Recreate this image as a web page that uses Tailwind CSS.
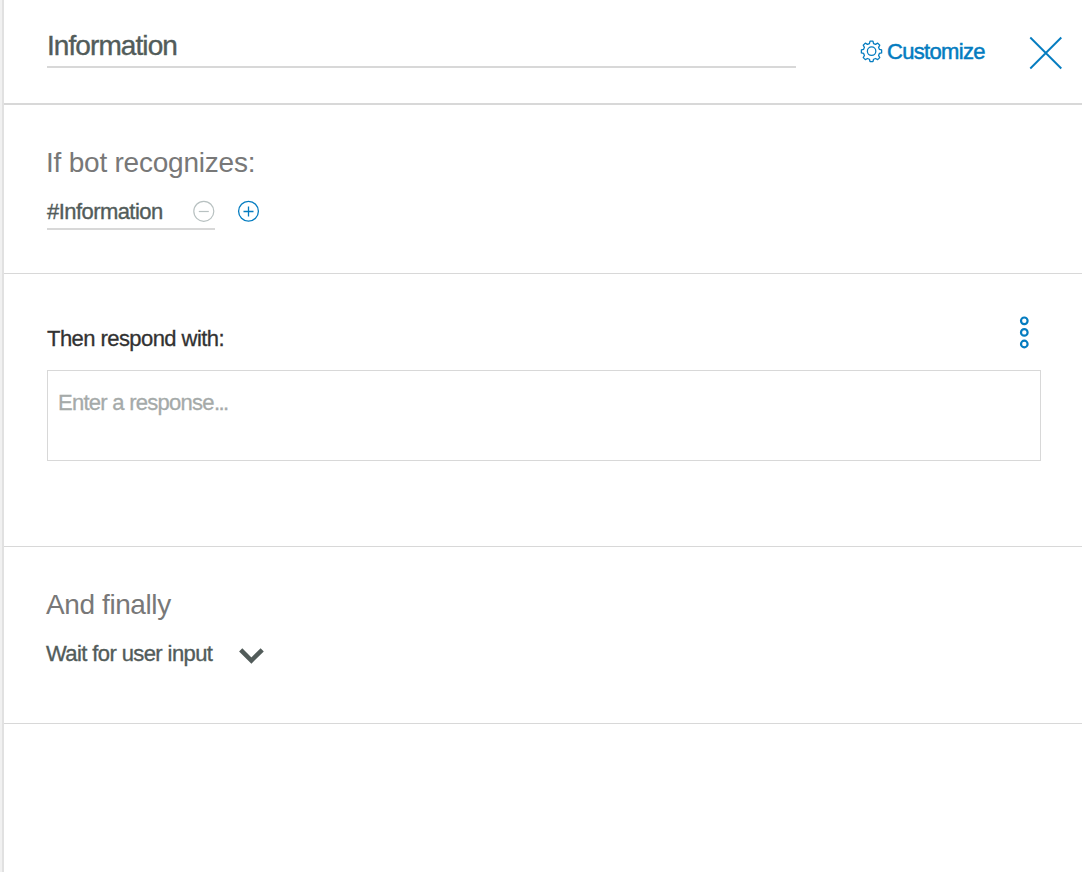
<!DOCTYPE html>
<html lang="en">
<head>
<meta charset="utf-8">
<title>Information</title>
<script src="https://cdn.jsdelivr.net/npm/@tailwindcss/browser@4"></script>
</head>
<body class="flex h-[872px] w-[1082px] overflow-hidden bg-white font-['Liberation_Sans',sans-serif] text-[22px] leading-6 text-[#525c5a]">
<div class="w-1 shrink-0 border-r-2 border-[#e1e1e1] bg-[#f1f1f1]"></div>
<main class="flex-1 bg-white">
  <header class="flex h-[105px] items-start border-b-2 border-[#d8d8d8] pl-[43px]">
    <div class="mt-[30px] h-[38px] w-[749px] border-b-2 border-[#d8d8d8] text-[28px] leading-8 tracking-[-0.92px] [-webkit-text-stroke:0.4px]">Information</div>
    <button class="mt-[40px] ml-[64px] flex w-[130px] items-start text-[#047cc0]">
      <svg class="mr-[4px] shrink-0" width="23" height="23" viewBox="-0.6 0 23.4 23.4" fill="none" stroke="currentColor" stroke-width="1.3" stroke-linejoin="round"><path d="M9.6 1.2h3l0.6 2.4 2 0.8 2.2-1.2 2.1 2.1-1.2 2.2 0.8 2 2.3 0.6v3l-2.3 0.6-0.8 2 1.2 2.2-2.1 2.1-2.2-1.2-2 0.8-0.6 2.3h-3l-0.6-2.3-2-0.8-2.2 1.2-2.1-2.1 1.2-2.2-0.8-2-2.3-0.6v-3l2.3-0.6 0.8-2-1.2-2.2 2.1-2.1 2.2 1.2 2-0.8z"/><circle cx="11.2" cy="11.4" r="4.3"/></svg>
      <span class="tracking-[-0.68px] [-webkit-text-stroke:0.5px]">Customize</span>
    </button>
    <button class="mt-[36px] ml-[39px] text-[#047cc0]" aria-label="Close"><svg width="34" height="34" viewBox="0 0 34 34" fill="none" stroke="currentColor" stroke-width="1.9"><path d="M1.3 1.5l31 31M32.3 1.5l-31 31"/></svg></button>
  </header>
  <section class="h-[169px] border-b border-[#d8d8d8] pt-[42px] pl-[42px]">
    <h2 class="text-[28px] leading-8 tracking-[-0.22px] text-[#787878]">If bot recognizes:</h2>
    <div class="mt-[21px] ml-px flex items-start">
      <div class="flex h-[30px] w-[168px] items-start justify-between border-b-2 border-[#d8d8d8]">
        <span class="tracking-[-0.56px] [-webkit-text-stroke:0.35px]">#Information</span>
        <svg width="22" height="22" viewBox="0 0 22 22" fill="none" stroke="#b8c1c1" stroke-width="1.2"><circle cx="10.8" cy="11.3" r="10"/><path d="M5.8 11.5h10"/></svg>
      </div>
      <svg class="ml-[22px]" width="23" height="23" viewBox="0 0 23 23" fill="none" stroke="#047cc0" stroke-width="1.3"><circle cx="11.5" cy="11.3" r="9.9"/><path d="M6.5 11.5h10M11.5 6.5v10"/></svg>
    </div>
  </section>
  <section class="h-[273px] border-b border-[#d8d8d8] pt-[42px] pr-[41px] pl-[43px]">
    <div class="flex h-[54px] items-start justify-between">
      <h3 class="mt-[11px] tracking-[-0.56px] text-[#323232] [-webkit-text-stroke:0.3px]">Then respond with:</h3>
      <svg class="mr-[11px]" width="12" height="34" viewBox="0 0 12 34" fill="none" stroke="#047cc0" stroke-width="2.2"><circle cx="6.3" cy="4.8" r="3.3"/><circle cx="6.3" cy="16.4" r="3.3"/><circle cx="6.3" cy="28" r="3.3"/></svg>
    </div>
    <div class="h-[91px] w-[994px] border border-[#d8d8d8] pt-[20px] pl-[10px] tracking-[-0.73px] text-[#a5aaa9] [-webkit-text-stroke:0.3px]">Enter a response<span class="tracking-[-1.6px]">...</span></div>
  </section>
  <section class="h-[177px] border-b border-[#d8d8d8] pt-[42px] pl-[42px]">
    <h2 class="text-[28px] leading-8 tracking-[-0.4px] text-[#787878]">And finally</h2>
    <button class="mt-[21px] flex items-start">
      <span class="w-[193px] text-left tracking-[-0.6px] [-webkit-text-stroke:0.35px]">Wait for user input</span>
      <svg class="mt-[5px]" width="26" height="18" viewBox="0 0 26 18" fill="none" stroke="#525c5a" stroke-width="4.5"><path d="M1.7 2.8L12.4 13.5 23.2 2.8"/></svg>
    </button>
  </section>
</main>
</body>
</html>
